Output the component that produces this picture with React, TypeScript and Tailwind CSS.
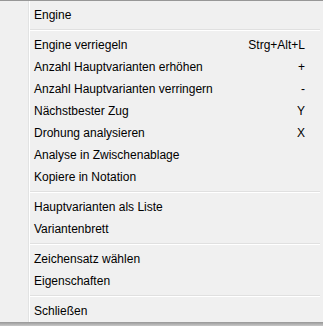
import React from 'react';

type Item = { label: string; shortcut?: string } | 'sep';

const items: Item[] = [
  { label: 'Engine' },
  'sep',
  { label: 'Engine verriegeln', shortcut: 'Strg+Alt+L' },
  { label: 'Anzahl Hauptvarianten erhöhen', shortcut: '+' },
  { label: 'Anzahl Hauptvarianten verringern', shortcut: '-' },
  { label: 'Nächstbester Zug', shortcut: 'Y' },
  { label: 'Drohung analysieren', shortcut: 'X' },
  { label: 'Analyse in Zwischenablage' },
  { label: 'Kopiere in Notation' },
  'sep',
  { label: 'Hauptvarianten als Liste' },
  { label: 'Variantenbrett' },
  'sep',
  { label: 'Zeichensatz wählen' },
  { label: 'Eigenschaften' },
  'sep',
  { label: 'Schließen' },
];

export default function App() {
  return (
    <div
      className="relative w-[323px] h-[326px] bg-[#f0f0f0] text-[12px] text-black overflow-hidden"
      style={{ fontFamily: '"Liberation Sans", Arial, sans-serif' }}
    >
      {/* frame */}
      <div className="absolute inset-x-0 top-0 h-px bg-[#979797]" />
      <div className="absolute inset-x-0 bottom-0 h-[4px] bg-gradient-to-b from-[#979797] to-[#c8c8c8]" />
      {/* gutter line */}
      <div className="absolute top-px bottom-[4px] left-[28px] w-px bg-[#e2e3e3]" />
      <div className="absolute top-px bottom-[4px] left-[29px] w-px bg-white" />

      <div className="flex flex-col pt-[4px] pl-[30px] pr-[3px]">
        {items.map((it, i) =>
          it === 'sep' ? (
            <div key={i} className="h-[8px] flex flex-col justify-center">
              <div className="h-px bg-[#e0e0e0]" />
              <div className="h-px bg-white" />
            </div>
          ) : (
            <div key={i} className="h-[22px] flex items-center pl-[4px] pr-[15px]">
              <span className="flex-1">{it.label}</span>
              {it.shortcut && <span>{it.shortcut}</span>}
            </div>
          )
        )}
      </div>
    </div>
  );
}
